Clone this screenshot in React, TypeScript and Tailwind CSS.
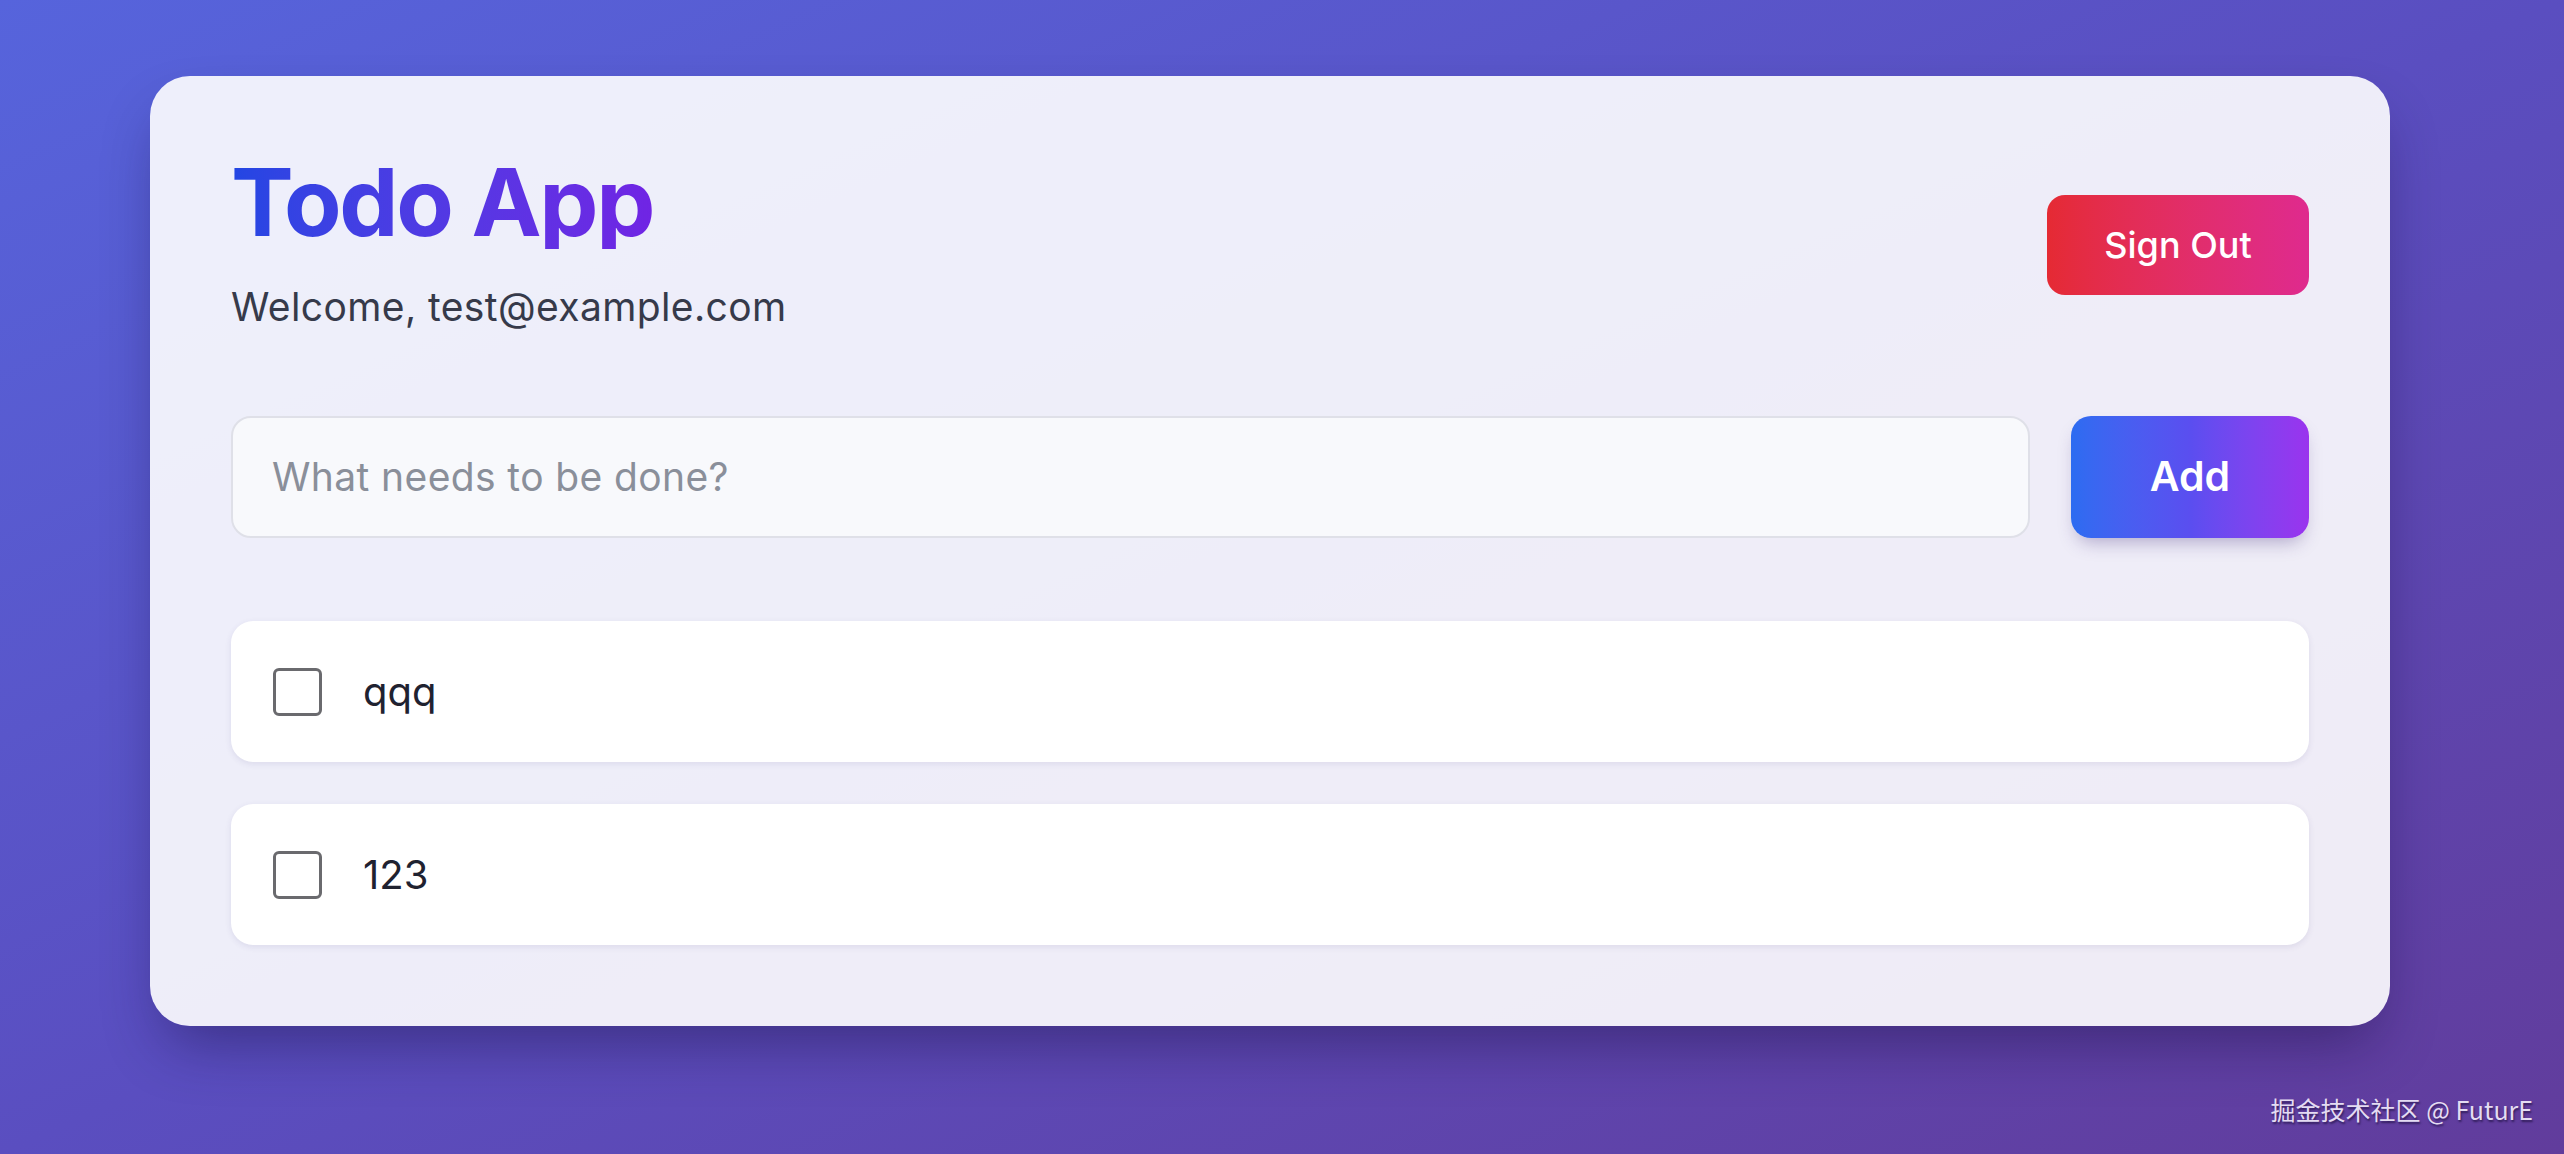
import React from "react";

const todos = [
  { id: 1, text: "qqq" },
  { id: 2, text: "123" },
];

export default function App() {
  return (
    <div className="relative min-h-screen w-full bg-linear-to-br from-[#5664dc] via-[#5a4ec0] to-[#613c9c] pl-[150px] pr-[174px] pt-[76px] font-['Inter','Noto_Sans',sans-serif]">
      <div className="rounded-[40px] bg-white/90 px-[81px] pt-[79px] pb-[81px] shadow-[0_30px_60px_-15px_rgba(20,10,60,0.45)]">
        <div className="flex items-center justify-between">
          <div>
            <h1 className="w-fit bg-linear-to-r from-[#2146e3] to-[#7024e4] bg-clip-text text-[94px] font-bold leading-none tracking-tight text-transparent">
              Todo App
            </h1>
            <p className="mt-[30px] text-[39px] leading-[55px] tracking-[0.01em] text-[#363a4a]">
              Welcome, test@example.com
            </p>
          </div>
          <button className="flex h-[100px] w-[262px] items-center justify-center rounded-[18px] bg-linear-to-r from-[#e52a33] to-[#df2a8e] text-[36px] font-medium text-white">
            Sign Out
          </button>
        </div>

        <div className="mt-[82px] flex gap-[41px]">
          <div className="flex h-[122px] flex-1 items-center rounded-[20px] border-2 border-[#dfe0e8] bg-[#f8f9fc] pl-[39px]">
            <span className="text-[39px] tracking-[0.01em] text-[#8a8f9a]">What needs to be done?</span>
          </div>
          <button className="flex h-[122px] w-[238px] items-center justify-center rounded-[20px] bg-linear-to-r from-[#2c6cf1] via-[#5a4ef0] to-[#9a33ee] text-[41px] font-semibold text-white shadow-[0_10px_18px_-6px_rgba(60,40,120,0.35)]">
            Add
          </button>
        </div>

        <div className="mt-[83px] flex flex-col gap-[42px]">
          {todos.map((t) => (
            <div
              key={t.id}
              className="flex h-[141px] items-center gap-[41px] rounded-[22px] bg-white pl-[42px] shadow-[0_2px_6px_rgba(60,50,120,0.10)]"
            >
              <div className="h-[48px] w-[49px] rounded-[6px] border-[3px] border-[#6a6a6e] bg-white" />
              <span className="text-[40px] text-[#1f2230]">{t.text}</span>
            </div>
          ))}
        </div>
      </div>

      <div className="absolute bottom-[26px] right-[31px] text-[25px] text-[#e4dcf2] [text-shadow:1px_2px_2px_rgba(20,10,50,0.6)] font-['Noto_Sans_CJK_SC','Noto_Sans',sans-serif]">
        掘金技术社区 @ FuturE
      </div>
    </div>
  );
}
